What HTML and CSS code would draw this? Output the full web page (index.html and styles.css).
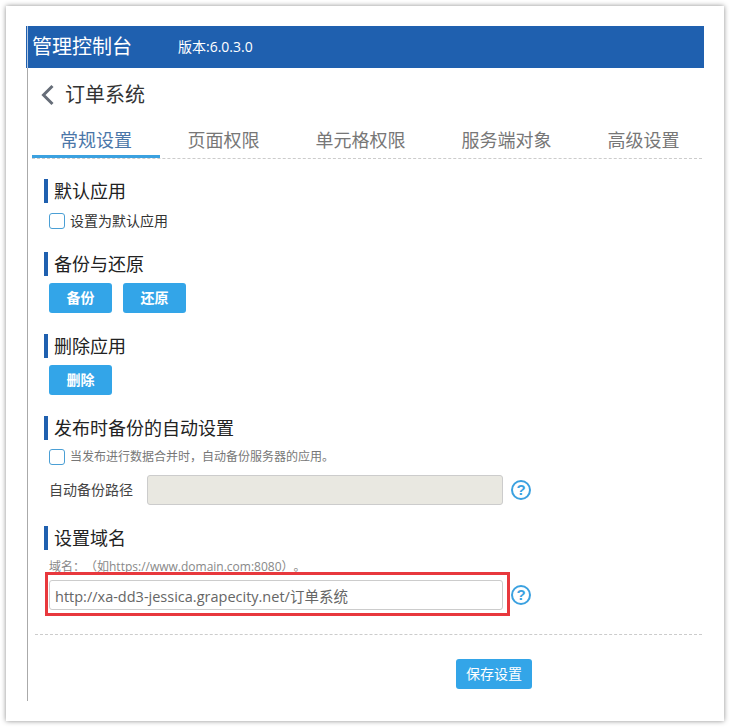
FILE: index.html
```html
<!DOCTYPE html>
<html>
<head>
<meta charset="utf-8">
<title>管理控制台</title>
<link rel="stylesheet" href="styles.css">
</head>
<body>
<div class="card">
  <div class="header">
    <span class="brand">管理控制台</span>
    <span class="version">版本:6.0.3.0</span>
  </div>
  <div class="main">
    <div class="back">
      <svg class="back-icon" width="14" height="22" viewBox="0 0 14 22"><path d="M12.5 2 L3.5 11 L12.5 20" fill="none" stroke="#666d78" stroke-width="3"/></svg>
      <span>订单系统</span>
    </div>
    <div class="tabs">
      <a class="tab active">常规设置</a>
      <a class="tab">页面权限</a>
      <a class="tab">单元格权限</a>
      <a class="tab">服务端对象</a>
      <a class="tab">高级设置</a>
    </div>

    <div class="section first">
      <h3>默认应用</h3>
      <label class="check"><input type="checkbox">设置为默认应用</label>
    </div>

    <div class="section second">
      <h3>备份与还原</h3>
      <div class="buttons">
        <button class="btn bold">备份</button>
        <button class="btn bold">还原</button>
      </div>
    </div>

    <div class="section">
      <h3>删除应用</h3>
      <div class="buttons">
        <button class="btn bold">删除</button>
      </div>
    </div>

    <div class="section">
      <h3>发布时备份的自动设置</h3>
      <label class="check small"><input type="checkbox">当发布进行数据合并时，自动备份服务器的应用。</label>
      <div class="path-row">
        <span class="path-label">自动备份路径</span>
        <input class="text" type="text" disabled>
        <span class="help">?</span>
      </div>
    </div>

    <div class="section">
      <h3>设置域名</h3>
      <p class="hint">域名：（如https://www.domain.com:8080）。</p>
      <div class="domain-row">
        <input class="text" type="text" value="http://xa-dd3-jessica.grapecity.net/订单系统">
        <span class="help">?</span>
        <div class="mark"></div>
      </div>
    </div>

    <div class="footer">
      <button class="btn save">保存设置</button>
    </div>
  </div>
</div>
</body>
</html>
```

FILE: styles.css
```css
body { margin: 0; background: #fff; font: 14px/20px "Open Sans", "Noto Sans CJK SC", sans-serif; color: #333; }
.card { width: 678px; height: 675px; margin: 6px; padding: 20px; background: #fff; box-shadow: 0 0 5px rgba(0,0,0,.45); }
.header { display: flex; align-items: center; height: 42px; padding-left: 6px; background: linear-gradient(90deg, #1f60af 1px, #b4c8e2 1px, #b4c8e2 2px, #1f60af 2px); color: #fff; }
.brand { width: 146px; font-size: 20px; }
.version { font-size: 14px; }
.main { height: 633px; margin-left: 1px; border-left: 1px solid #aaa; }
.back { display: flex; align-items: center; height: 54px; padding-left: 12px; font-size: 20px; color: #333; }
.back-icon { margin-right: 11px; }
.tabs { display: flex; width: 670px; margin-left: 4px; height: 36px; border-bottom: 1px dashed #ccc; }
.tab { height: 36px; padding: 0 28.5px 0 27.5px; font-size: 18px; line-height: 36px; color: #777; white-space: nowrap; box-sizing: border-box; }
.tab.active { padding: 0 28px; color: #4a76a8; border-bottom: 3px solid #3ba1e0; }
.section { margin-top: 21px; padding-left: 16px; }
.section.first { margin-top: 20px; }
.section.second { margin-top: 23px; }
.section h3 { margin: 0 0 7px; padding-left: 6px; height: 24px; border-left: 4px solid #1f60af; font-size: 18px; font-weight: normal; line-height: 24px; color: #222; }
.check { display: flex; align-items: center; height: 16px; margin: 10px 0 0 5px; font-size: 14px; color: #333; }
.check.small { margin-top: 9px; font-size: 12px; color: #777; }
.check input { appearance: none; width: 16px; height: 16px; margin: 0 5px 0 0; border: 1px solid #4a9fd5; border-radius: 3px; background: #fff; }
.buttons { display: flex; gap: 11px; padding-left: 5px; }
.btn { width: 63px; height: 30px; padding: 0; border: 0; border-radius: 3px; background: #33a5e8; font: inherit; color: #fff; }
.btn.bold { font-weight: bold; }
.path-row, .domain-row { display: flex; align-items: center; position: relative; height: 30px; padding-left: 5px; }
.path-row { margin-top: 10px; }
.path-label { width: 98px; color: #444; }
.text { box-sizing: border-box; height: 30px; padding: 0 5px; border: 1px solid #ccc; border-radius: 3px; background: #fff; font: 14.5px "Open Sans", "Noto Sans CJK SC", sans-serif; color: #666; }
.path-row .text { width: 356px; background: #e9e8e1; }
.domain-row .text { width: 454px; }
.help { box-sizing: border-box; width: 20px; height: 20px; margin-left: 8px; border: 2px solid #3ba1e0; border-radius: 50%; font: bold 15px/16px "Liberation Sans", sans-serif; color: #3ba1e0; text-align: center; }
.hint { margin: 0; height: 23px; padding: 2px 0 0 5px; box-sizing: border-box; font-size: 12px; line-height: 16px; color: #888; text-spacing-trim: space-all; }
.mark { position: absolute; left: 1px; top: -8px; width: 465px; height: 44px; box-sizing: border-box; border: 3px solid #e8383d; }
.footer { display: flex; justify-content: flex-end; margin: 24px 2px 0 7px; padding: 24px 170px 0 0; border-top: 1px dashed #ccc; }
.btn.save { width: 76px; }
```
